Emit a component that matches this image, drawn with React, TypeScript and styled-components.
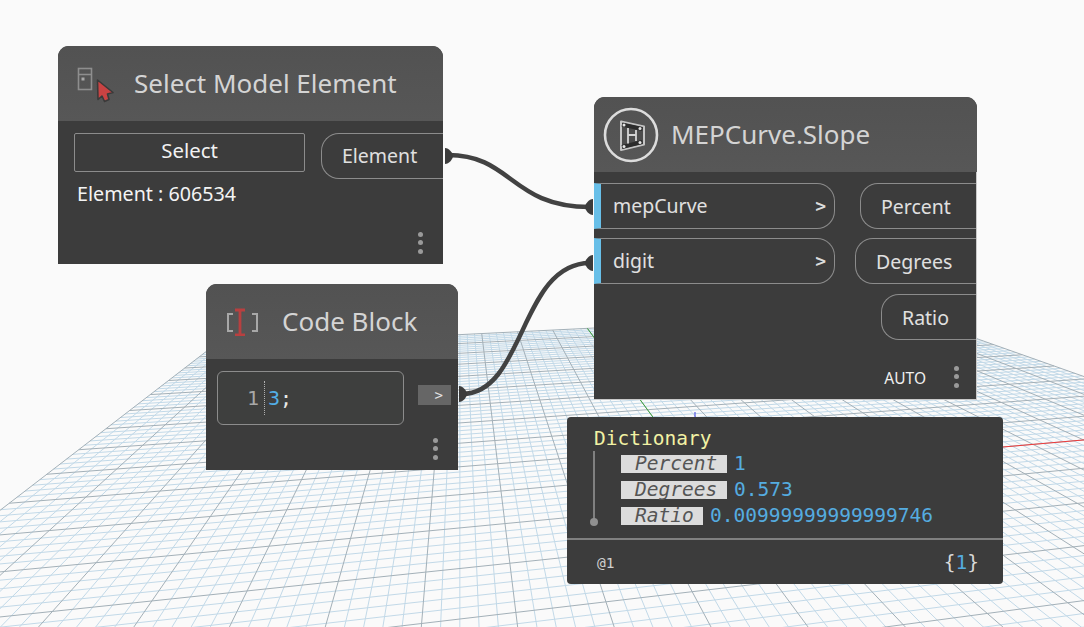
import React from "react";
import styled, { createGlobalStyle } from "styled-components";

const Global = createGlobalStyle`
  html, body { margin: 0; padding: 0; background: #fafafa; overflow: hidden; }
`;

const UI = `"Noto Sans", "Open Sans", sans-serif`;
const MONO = `"DejaVu Sans Mono", "Liberation Mono", monospace`;

const Canvas = styled.div`
  position: relative;
  width: 1084px;
  height: 627px;
  background: #fafafa;
  overflow: hidden;
  font-family: ${UI};
`;

const Layer = styled.svg`
  position: absolute;
  left: 0;
  top: 0;
  width: 1084px;
  height: 627px;
  pointer-events: none;
`;

const Node = styled.section<{ $x: number; $y: number; $w: number; $h: number }>`
  position: absolute;
  left: ${(p) => p.$x}px;
  top: ${(p) => p.$y}px;
  width: ${(p) => p.$w}px;
  height: ${(p) => p.$h}px;
  display: flex;
  flex-direction: column;
  background: #3c3c3c;
  border-radius: 11px 11px 0 0;
  overflow: hidden;
`;

const Header = styled.header<{ $h: number; $pad: number; $gap: number }>`
  flex: none;
  height: ${(p) => p.$h}px;
  padding-left: ${(p) => p.$pad}px;
  display: flex;
  align-items: center;
  gap: ${(p) => p.$gap}px;
  background: linear-gradient(#525252, #575757);
`;

const Title = styled.h2`
  margin: 0 0 2px;
  font: 400 26px/1 ${UI};
  color: #d4d4d4;
  white-space: nowrap;
`;

const Body = styled.div`
  position: relative;
  flex: 1;
  min-height: 0;
`;

const Dots = styled.div<{ $r: number; $b: number }>`
  position: absolute;
  right: ${(p) => p.$r}px;
  bottom: ${(p) => p.$b}px;
  display: flex;
  flex-direction: column;
  gap: 3.6px;
  i {
    display: block;
    width: 5px;
    height: 5px;
    border-radius: 50%;
    background: #9a9a9a;
  }
`;

const ThreeDots = ({ r, b }: { r: number; b: number }) => (
  <Dots $r={r} $b={b}>
    <i />
    <i />
    <i />
  </Dots>
);

/* Select Model Element */
const SelectButton = styled.button`
  height: 39px;
  box-sizing: border-box;
  background: #3c3c3c;
  border: 1px solid #8c8c8c;
  border-radius: 2px;
  color: #f2f2f2;
  font: 400 20.4px/1 ${UI};
  padding: 0 0 5px;
`;

const ValueText = styled.p`
  margin: 2px 0 0 3px;
  font: 400 19.7px/26px ${UI};
  color: #f4f4f4;
  white-space: nowrap;
  grid-column: 1;
`;

const OutPort = styled.div<{ $w: number; $lh?: number }>`
  width: ${(p) => p.$w}px;
  height: 46px;
  box-sizing: border-box;
  border: 1.5px solid #8c8c8c;
  border-right: none;
  border-radius: 18px 0 0 18px;
  color: #e0e0e0;
  font: 400 19.5px/${(p) => p.$lh ?? 45}px ${UI};
  padding-left: 20px;
  white-space: nowrap;
`;

const SelectBody = styled(Body)`
  display: grid;
  grid-template-columns: 231px 1fr;
  column-gap: 16px;
  align-content: start;
  padding: 12px 0 0 16px;
`;

/* MEPCurve */
const MepBody = styled(Body)`
  display: grid;
  grid-template-columns: 241px 1fr;
  padding-top: 11px;
  align-content: start;
  height: 228px;
  flex: none;
  box-sizing: border-box;
  border-right: 1px solid #c9c9c9;
  border-bottom: 1px solid #c9c9c9;
`;

const Inputs = styled.div`
  display: flex;
  flex-direction: column;
  gap: 9px;
`;

const Outputs = styled.div`
  display: flex;
  flex-direction: column;
  align-items: flex-end;
  gap: 9px;
  & > :last-child {
    margin-top: 1px;
  }
`;

const InPort = styled.div`
  height: 46px;
  box-sizing: border-box;
  border: 1.5px solid #8c8c8c;
  border-left: 7px solid #68bfe8;
  border-radius: 0 18px 18px 0;
  display: flex;
  align-items: center;
  justify-content: space-between;
  padding: 0 8px 1px 12px;
  color: #e0e0e0;
  font: 400 19.5px/1 ${UI};
`;

const Chevron = styled.span`
  font: 700 18px/1 ${MONO};
  color: #dcdcdc;
`;

const AutoLabel = styled.span`
  position: absolute;
  right: 50px;
  bottom: 13px;
  font: 400 15.5px/1 ${UI};
  color: #f0f0f0;
`;

/* Code block */
const CodeBody = styled(Body)`
  display: flex;
  align-items: flex-start;
  padding: 12px 0 0 11px;
`;

const Editor = styled.div`
  width: 187px;
  height: 54px;
  box-sizing: border-box;
  border: 1.5px solid #8c8c8c;
  border-radius: 6px;
  background: #3e3f3e;
  display: flex;
  align-items: center;
  padding-left: 29px;
  font: 400 20px/1 ${MONO};
`;

const LineNo = styled.span`
  color: #a8a8a8;
  padding-right: 5px;
`;

const Gutter = styled.span`
  align-self: center;
  height: 34px;
  border-left: 1px dotted #b0b0b0;
  margin-right: 3px;
`;

const Num = styled.span`
  color: #52aee6;
`;

const Semi = styled.span`
  color: #e8e8e8;
`;

const CodeOut = styled.div`
  width: 33px;
  height: 20px;
  margin: 14px 0 0 14px;
  background: #666;
  color: #e4e4e4;
  font: 400 14px/20px ${MONO};
  text-align: right;
  padding-right: 8px;
  box-sizing: border-box;
`;

/* Preview bubble */
const Preview = styled.aside`
  position: absolute;
  left: 567px;
  top: 417px;
  width: 436px;
  height: 167px;
  background: #3c3c3c;
  border-radius: 4px;
  display: flex;
  flex-direction: column;
  font: 400 19.5px/1 ${MONO};
`;

const Tree = styled.div`
  position: relative;
  flex: none;
  height: 109px;
  padding: 12px 0 0 27px;
  border-bottom: 2px solid #808080;
`;

const TreeRoot = styled.div`
  color: #f2f2a4;
  line-height: 20px;
  margin-bottom: 2px;
`;

const TreeRail = styled.div`
  position: absolute;
  left: 26px;
  top: 34px;
  width: 2px;
  height: 72px;
  background: #808080;
  &::after {
    content: "";
    position: absolute;
    left: -3px;
    bottom: -3px;
    width: 8px;
    height: 8px;
    border-radius: 50%;
    background: #909090;
  }
`;

const Row = styled.div`
  display: flex;
  align-items: center;
  height: 26px;
  margin-left: 27px;
`;

const Key = styled.span<{ $w: number }>`
  width: ${(p) => p.$w}px;
  height: 18.5px;
  background: #dcdcdc;
  color: #555;
  font-style: italic;
  line-height: 18px;
  white-space: pre;
  padding-left: 14px;
  box-sizing: border-box;
  margin-right: 7px;
`;

const Value = styled.span`
  color: #55ace0;
`;

const Footer = styled.div`
  flex: 1;
  display: flex;
  align-items: center;
  justify-content: space-between;
  padding: 2px 24px 0 30px;
`;

const Level = styled.span`
  font-size: 14.5px;
  color: #d0d0d0;
`;

const Count = styled.span`
  font-size: 19.5px;
  color: #d8d8d8;
`;

/* Perspective grid */
const O: [number, number] = [695, 474];
const VU: [number, number] = [4620, 130];
const VV: [number, number] = [460, 156];
const A = 0.00314;
const B = 0.0169;
const FRONT = -35;

const project = (u: number, v: number): string => {
  const w = A * u + B * v + 1;
  const x = (A * u * VU[0] + B * v * VV[0] + O[0]) / w;
  const y = (A * u * VU[1] + B * v * VV[1] + O[1]) / w;
  return `${x.toFixed(2)} ${y.toFixed(2)}`;
};

const buildGrid = (major: boolean): string => {
  const parts: string[] = [];
  for (let i = -50; i <= 50; i++) {
    if ((i % 5 === 0) !== major) continue;
    parts.push(`M${project(i, FRONT)}L${project(i, 50)}`);
    if (i >= FRONT) parts.push(`M${project(-50, i)}L${project(50, i)}`);
  }
  return parts.join("");
};

const Grid = () => (
  <Layer viewBox="0 0 1084 627">
    <path d={buildGrid(false)} fill="none" stroke="#c2d9e8" strokeWidth={1} />
    <path d={buildGrid(true)} fill="none" stroke="#a3b0b8" strokeWidth={1} />
    <path d={`M${project(0, 0)}L${project(0, 50)}`} stroke="#3da33d" strokeWidth={1} fill="none" />
    <path d={`M${project(0, 0)}L${project(50, 0)}`} stroke="#ee3b3b" strokeWidth={1} fill="none" />
    <path d="M695 474L695 412" stroke="#3a3ae0" strokeWidth={1} fill="none" />
  </Layer>
);

const nub = (x: number, y: number, dir: 1 | -1) =>
  `M${x} ${y - 8}C${x + dir * 4} ${y - 8} ${x + dir * 8} ${y - 3} ${x + dir * 8} ${y}C${x + dir * 8} ${y + 3} ${x + dir * 4} ${y + 8} ${x} ${y + 8}Z`;

const Wires = () => (
  <Layer viewBox="0 0 1084 627">
    <g fill="none" stroke="#424242" strokeWidth={4.5}>
      <path d="M448 155C512 155 511 207 590 207" />
      <path d="M462 394C525 394 520 263 590 263" />
    </g>
    <g fill="#3c3c3c">
      <path d={nub(445, 156, 1)} />
      <path d={nub(459, 394, 1)} />
      <path d={nub(593, 207, -1)} />
      <path d={nub(593, 263, -1)} />
    </g>
  </Layer>
);

const SelectIcon = () => (
  <svg width="42" height="46" viewBox="0 0 42 46" fill="none" style={{ flex: "none" }}>
    <rect x="1.5" y="7.5" width="13" height="21" stroke="#8e8e8e" strokeWidth="1.6" />
    <path d="M1.5 13.5H14.5" stroke="#8e8e8e" strokeWidth="1.6" />
    <rect x="4.5" y="16.5" width="3" height="3" fill="#a8a8a8" />
    <path
      d="M20.5 19L36 31.5L30.5 33L32 38.5L27.5 40.5L25 35L21 38.5Z"
      fill="#c94343"
      stroke="#3a3a3a"
      strokeWidth="1.6"
      strokeLinejoin="round"
    />
  </svg>
);

const CurveIcon = () => (
  <svg width="56" height="56" viewBox="0 0 56 56" fill="none" style={{ flex: "none" }}>
    <circle cx="28" cy="28" r="26" stroke="#dcdcdc" strokeWidth="2.6" />
    <path
      d="M18 14.5L41 19.5V37.5L18 43Z"
      stroke="#c4c4c4"
      strokeWidth="2"
      strokeLinejoin="round"
      fill="#4c4c4c"
    />
    <path d="M19 17.5L39.5 22M19 40L39.5 35" stroke="#2c2c2c" strokeWidth="4" />
    <path d="M25 21V36.5M33 23V34M25 28H33" stroke="#d4d4d4" strokeWidth="1.8" />
    <circle cx="21" cy="18" r="1.5" fill="#e4e4e4" />
    <circle cx="37" cy="21.5" r="1.5" fill="#e4e4e4" />
    <circle cx="21" cy="39.5" r="1.5" fill="#e4e4e4" />
    <circle cx="37" cy="35.5" r="1.5" fill="#e4e4e4" />
  </svg>
);

const CodeIcon = () => (
  <svg width="35" height="28" viewBox="0 0 35 28" fill="none" style={{ flex: "none" }}>
    <path d="M7 6H2V23H7M26 6H31V23H26" stroke="#a8a8a8" strokeWidth="2" />
    <path d="M9 2H19M14 2V27M9 27H19" stroke="#b84040" strokeWidth="2.8" />
  </svg>
);

export default function App() {
  return (
    <Canvas>
      <Global />
      <Grid />

      <Node $x={58} $y={46} $w={385} $h={218}>
        <Header $h={75} $pad={19} $gap={15}>
          <SelectIcon />
          <Title>Select Model Element</Title>
        </Header>
        <SelectBody>
          <SelectButton>Select</SelectButton>
          <OutPort $w={122} $lh={43}>Element</OutPort>
          <ValueText>Element : 606534</ValueText>
          <ThreeDots r={20} b={10} />
        </SelectBody>
      </Node>

      <Node $x={594} $y={97} $w={383} $h={303}>
        <Header $h={75} $pad={9} $gap={12}>
          <CurveIcon />
          <Title>MEPCurve.Slope</Title>
        </Header>
        <MepBody>
          <Inputs>
            <InPort>
              mepCurve
              <Chevron>&gt;</Chevron>
            </InPort>
            <InPort>
              digit
              <Chevron>&gt;</Chevron>
            </InPort>
          </Inputs>
          <Outputs>
            <OutPort $w={116}>Percent</OutPort>
            <OutPort $w={121}>Degrees</OutPort>
            <OutPort $w={95}>Ratio</OutPort>
          </Outputs>
          <AutoLabel>AUTO</AutoLabel>
          <ThreeDots r={17} b={11} />
        </MepBody>
      </Node>

      <Node $x={206} $y={284} $w={252} $h={186}>
        <Header $h={75} $pad={20} $gap={21}>
          <CodeIcon />
          <Title>Code Block</Title>
        </Header>
        <CodeBody>
          <Editor>
            <LineNo>1</LineNo>
            <Gutter />
            <Num>3</Num>
            <Semi>;</Semi>
          </Editor>
          <CodeOut>&gt;</CodeOut>
          <ThreeDots r={20} b={10} />
        </CodeBody>
      </Node>

      <Preview>
        <Tree>
          <TreeRoot>Dictionary</TreeRoot>
          <TreeRail />
          <Row>
            <Key $w={106}>Percent</Key>
            <Value>1</Value>
          </Row>
          <Row>
            <Key $w={106}>Degrees</Key>
            <Value>0.573</Value>
          </Row>
          <Row>
            <Key $w={82}>Ratio</Key>
            <Value>0.00999999999999746</Value>
          </Row>
        </Tree>
        <Footer>
          <Level>@1</Level>
          <Count>
            {"{"}
            <Value>1</Value>
            {"}"}
          </Count>
        </Footer>
      </Preview>

      <Wires />
    </Canvas>
  );
}
